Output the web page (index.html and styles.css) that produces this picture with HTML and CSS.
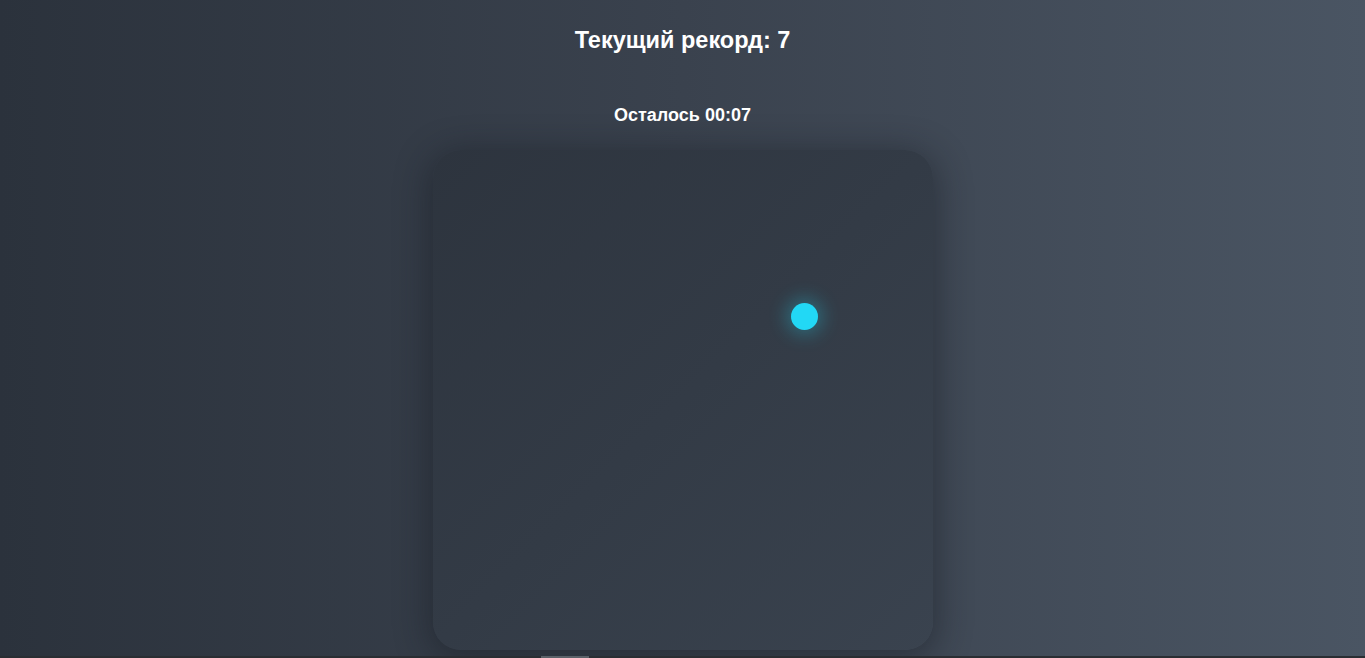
FILE: index.html
```html
<!DOCTYPE html>
<html lang="ru">
<head>
<meta charset="utf-8">
<link rel="stylesheet" href="styles.css">
<title>Игра</title>
</head>
<body>
<main class="page">
  <h2 class="record">Текущий рекорд: 7</h2>
  <div class="timer">Осталось 00:07</div>
  <div class="board">
    <span class="dot" style="left:358px;top:153px"></span>
  </div>
</main>
<div class="bottom-strip"><span class="thumb"></span></div>
</body>
</html>
```
FILE: styles.css
```css
html, body {
  margin: 0;
  padding: 0;
  height: 100%;
  overflow: hidden;
}
body {
  background: linear-gradient(90deg, #2b323c 0%, #3a424e 50%, #4a5563 100%);
  font-family: "Liberation Sans", Arial, sans-serif;
  color: #fff;
  display: flex;
  flex-direction: column;
}
.page {
  flex: 1;
  display: flex;
  flex-direction: column;
  align-items: center;
}
.record {
  margin: 27px 0 0;
  font-size: 23.5px;
  line-height: 26px;
  font-weight: 700;
}
.timer {
  margin-top: 52px;
  font-size: 18px;
  line-height: 21px;
  font-weight: 700;
}
.board {
  position: relative;
  margin-top: 24px;
  width: 500px;
  height: 500px;
  border-radius: 28px;
  background: linear-gradient(135deg, #2d343e 0%, #333b46 50%, #3a434f 100%);
  box-shadow: 0 6px 34px 4px rgba(20, 24, 30, 0.45);
}
.dot {
  position: absolute;
  width: 27px;
  height: 27px;
  border-radius: 50%;
  background: #22d8f5;
  box-shadow: 0 0 18px 5px rgba(34, 211, 238, 0.3);
}
.bottom-strip {
  height: 2px;
  background: #2a2e33;
  position: relative;
}
.thumb {
  position: absolute;
  left: 541px;
  width: 48px;
  top: 0;
  height: 2px;
  background: #5b6168;
}
```
